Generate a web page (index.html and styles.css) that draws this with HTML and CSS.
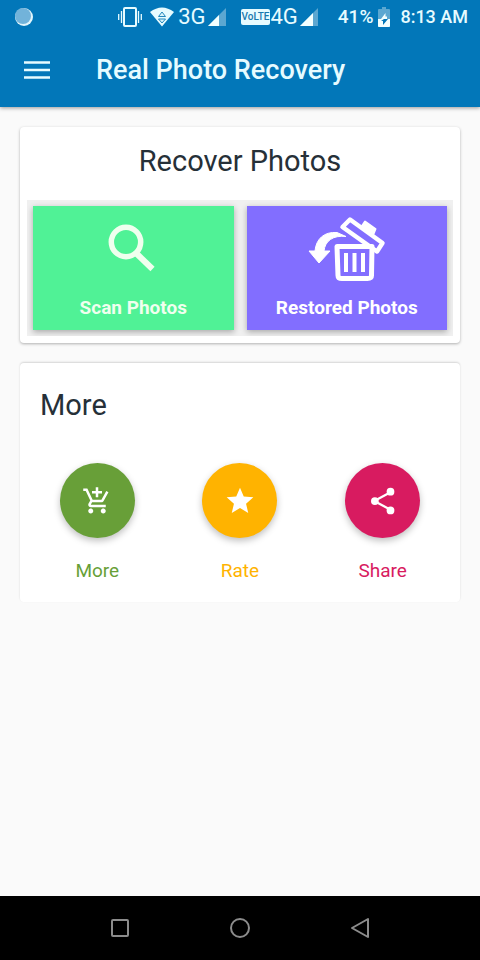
FILE: index.html
```html
<!DOCTYPE html>
<html lang="en">
<head>
<meta charset="utf-8">
<meta name="viewport" content="width=device-width, initial-scale=1">
<title>Real Photo Recovery</title>
<link rel="stylesheet" href="styles.css">
</head>
<body>
<div class="screen">
  <header class="header">
    <div class="status">
      <svg class="notice" width="20" height="20" viewBox="0 0 20 20" aria-hidden="true"><circle cx="10" cy="10" r="9" fill="#e2f5fb"/><circle cx="9" cy="9" r="8" fill="#72b3da"/></svg>
      <div class="network">
        <svg width="24" height="20" viewBox="0 0 24 20" fill="none" stroke="#e6fbff" aria-hidden="true"><rect x="6" y="1" width="12" height="18" rx="1" stroke-width="2"/><path d="M3.500 4v12M.7 7v6M20.500 4v12M23.300 7v6" stroke-width="1.300"/></svg>
        <svg class="wifi" width="24" height="20" viewBox="0 0 24 20" aria-hidden="true"><path d="M0 5Q12-4 24 5L12 19.500z" fill="#e6fbff"/><path d="M8.500 9.500 12 5l3.500 4.500zM8.500 12h7L12 16z" fill="#d9f3fa" stroke="#2388bd"/></svg>
        <span class="generation">3G</span>
        <svg class="signal" width="18" height="18" viewBox="0 0 18 18" aria-hidden="true"><path d="M0 18 18 0v18z" fill="#5ba7d1"/><path d="M0 18 11 7v11z" fill="#f2ffff"/></svg>
      </div>
      <div class="network second">
        <span class="volte">VoLTE</span>
        <span class="generation">4G</span>
        <svg class="signal" width="18" height="18" viewBox="0 0 18 18" aria-hidden="true"><path d="M0 18 18 0v18z" fill="#5ba7d1"/><path d="M0 18 13 5v13z" fill="#f2ffff"/></svg>
      </div>
      <span class="charge">41%</span>
      <svg class="battery" width="12" height="20" viewBox="0 0 12 20" aria-hidden="true"><path d="M1 2h3V0h4v2h3q1 0 1 1v16q0 1-1 1H1q-1 0-1-1V3q0-1 1-1z" fill="#5ba7d1"/><path d="M0 12h12v7q0 1-1 1H1q-1 0-1-1z" fill="#f2ffff"/><path d="M6 12h4l-5 6v-4H3z" fill="#0277b9"/><path d="M7.500 6 3 12h6V9.500H7.500z" fill="#f2ffff"/></svg>
      <time class="clock">8:13 AM</time>
    </div>
    <div class="toolbar">
      <button class="menu" type="button" aria-label="Open menu"><svg width="26" height="18" viewBox="0 0 26 18" aria-hidden="true"><path d="M0 1.500h26M0 9h26M0 16.500h26" stroke="#e6fbff" stroke-width="2.500"/></svg></button>
      <h1>Real Photo Recovery</h1>
    </div>
  </header>
  <main>
    <section class="card recover">
      <h2>Recover Photos</h2>
      <div class="tiles">
        <button class="tile scan" type="button">
          <svg width="84" height="80" viewBox="0 0 84 80" fill="none" stroke="#efffee" aria-hidden="true"><circle cx="35" cy="36" r="14.700" stroke-width="5.500"/><path d="m46 48 15.500 15" stroke-width="6"/></svg>
          <span>Scan Photos</span>
        </button>
        <button class="tile restored" type="button">
          <svg width="84" height="80" viewBox="0 0 84 80" fill="none" stroke="#fff" stroke-linejoin="round" aria-hidden="true"><path d="M32 40.500h35l-.5 29q0 3-4 3H37q-4 0-4-3z" stroke-width="5"/><path d="M41 47v19M49.500 47v19M58 47v19" stroke-width="4"/><path d="M45 13.500 77.500 37 72 45.500 37.500 21z" stroke-width="4.500"/><path d="m57 20 3-4.500 10.500 7.500-2 5z" fill="#fff" stroke-width="2"/><path d="M4 45h6C11 33 19 25.500 32 26.500l9 4C28 29 20 35 19 45h6L14 57z" fill="#fff" stroke-width="1"/></svg>
          <span>Restored Photos</span>
        </button>
      </div>
    </section>
    <section class="card more">
      <h2>More</h2>
      <div class="actions">
        <button class="action apps" type="button">
          <span class="disc"><svg width="30" height="30" viewBox="0 0 24 24" fill="#fff" aria-hidden="true"><path d="M11 9h2V6h3V4h-3V1h-2v3H8v2h3v3zm-4 9c-1.100 0-1.990.9-1.990 2S5.900 22 7 22s2-.9 2-2-.9-2-2-2zm10 0c-1.100 0-1.990.9-1.990 2s.89 2 1.990 2 2-.9 2-2-.9-2-2-2zm-9.830-3.250.03-.12.9-1.630h7.450c.75 0 1.410-.41 1.750-1.030l3.860-7.010L19.420 4h-.01l-1.100 2-2.760 5H8.530l-.13-.27L6.160 6l-.95-2-.94-2H1v2h2l3.600 7.590-1.350 2.450c-.16.28-.25.61-.25.96 0 1.100.9 2 2 2h12v-2H7.420c-.13 0-.25-.11-.25-.25z"/></svg></span>
          <span>More</span>
        </button>
        <button class="action rate" type="button">
          <span class="disc"><svg width="32" height="32" viewBox="0 0 24 24" fill="#fff" aria-hidden="true"><path d="M12 17.270 18.180 21l-1.640-7.030L22 9.240l-7.190-.61L12 2 9.190 8.630 2 9.240l5.460 4.730L5.820 21z"/></svg></span>
          <span>Rate</span>
        </button>
        <button class="action share" type="button">
          <span class="disc"><svg width="30" height="30" viewBox="0 0 24 24" aria-hidden="true"><path d="M18 5 5 12l13 7" fill="none" stroke="#fff" stroke-width="1.800"/><g fill="#fff"><circle cx="18" cy="4.500" r="3.100"/><circle cx="5.500" cy="12" r="3.100"/><circle cx="18" cy="19.500" r="3.100"/></g></svg></span>
          <span>Share</span>
        </button>
      </div>
    </section>
  </main>
  <nav class="navigation" aria-label="System">
    <button type="button" aria-label="Recent apps"><svg width="24" height="24" viewBox="0 0 24 24"><rect x="4" y="4" width="16" height="16" rx="1"/></svg></button>
    <button type="button" aria-label="Home"><svg width="24" height="24" viewBox="0 0 24 24"><circle cx="12" cy="12" r="9"/></svg></button>
    <button type="button" aria-label="Back"><svg width="24" height="24" viewBox="0 0 24 24"><path d="M20 3v18L4 12z" stroke-linejoin="round"/></svg></button>
  </nav>
</div>
</body>
</html>
```
FILE: styles.css
```css
* { box-sizing: border-box; }
body { margin: 0; font-family: Roboto, sans-serif; background: #fafafa; }
button { margin: 0; padding: 0; border: 0; background: none; font: inherit; color: inherit; }
svg { display: block; flex: none; }
h1, h2 { margin: 0; }
.screen { min-height: 100vh; display: flex; flex-direction: column; }

.header { background: #0277b9; color: #e6fbff; box-shadow: 0 1px 4px rgba(0, 0, 0, .4); }
.status { display: flex; align-items: center; height: 33px; padding: 0 12px 0 14px; }
.network { display: flex; align-items: center; margin-left: auto; }
.network.second { margin-left: 15px; }
.wifi { margin: 0 4px 0 8px; }
.generation { font-size: 22px; line-height: 32px; font-weight: 400; }
.signal { margin-left: 2px; }
.volte { padding: 0 1px; border-radius: 2px; background: #e6fbff; color: #1879ae; font-size: 10px; line-height: 16px; font-weight: 500; }
.charge { margin-left: 20px; }
.battery { margin: 0 10px 0 5px; }
.charge, .clock { font-size: 19px; line-height: 34px; font-weight: 500; }
.clock { font-size: 18px; }
.toolbar { display: flex; align-items: center; height: 74px; padding: 0 24px; }
.menu { width: 26px; margin-right: 46px; }
h1 { font-size: 27px; line-height: 36px; font-weight: 500; }

main { flex: 1; display: flex; flex-direction: column; gap: 20px; padding: 20px; }
.card { background: #fff; border-radius: 4px; box-shadow: 0 1px 3px rgba(0, 0, 0, .3); }
h2 { font-size: 29px; line-height: 36px; font-weight: 400; color: #263038; }
.recover { padding: 16px 7px 7px; text-align: center; }
.tiles { display: grid; grid-template-columns: 1fr 1fr; gap: 13px; margin-top: 21px; padding: 6px; background: #f0f0f0; overflow: hidden; }
.tile { display: flex; flex-direction: column; align-items: center; height: 124px; color: #fff; font-size: 19px; line-height: 24px; font-weight: 700; box-shadow: 0 2px 6px rgba(0, 0, 0, .3); }
.tile span { margin-top: 10px; }
.scan { background: #50f296; color: #efffee; }
.restored { background: #826eff; }

.more { padding: 24px 6px 19px; box-shadow: 0 -1px 2px rgba(0, 0, 0, .15); }
.more h2 { padding: 0 14px; }
.actions { display: grid; grid-template-columns: repeat(3, 1fr); margin-top: 40px; }
.action { display: flex; flex-direction: column; align-items: center; gap: 21px; font-size: 19px; line-height: 24px; }
.disc { display: grid; place-items: center; width: 75px; height: 75px; border-radius: 50%; background: currentColor; box-shadow: 0 3px 7px rgba(0, 0, 0, .25); }
.apps { color: #689f38; }
.rate { color: #ffb300; }
.share { color: #d81b60; }

.navigation { display: grid; grid-template-columns: repeat(3, 120px); justify-content: center; height: 64px; background: #000; }
.navigation button { display: grid; place-items: center; }
.navigation svg { fill: none; stroke: #8c8c8c; stroke-width: 2; }
```
